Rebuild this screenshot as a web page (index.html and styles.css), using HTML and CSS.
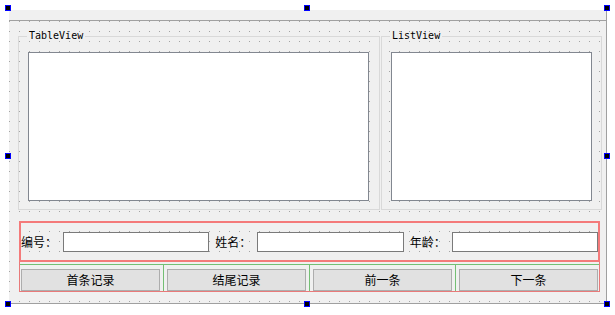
FILE: index.html
```html
<!DOCTYPE html>
<html>
<head>
<meta charset="utf-8">
<link rel="stylesheet" href="styles.css">
</head>
<body>
<div class="page">
  <div class="form">
    <div class="menubar"></div>
    <div class="central">
      <div class="views">
        <fieldset class="group group-table">
          <legend>TableView</legend>
          <div class="view view-table"></div>
        </fieldset>
        <fieldset class="group group-list">
          <legend>ListView</legend>
          <div class="view view-list"></div>
        </fieldset>
      </div>
      <div class="fields">
        <span class="label">编号：</span>
        <input class="edit" type="text">
        <span class="label">姓名：</span>
        <input class="edit" type="text">
        <span class="label">年龄：</span>
        <input class="edit" type="text">
      </div>
      <div class="buttons">
        <div class="btn-cells">
          <button class="btn">首条记录</button>
          <span class="sep"></span>
          <button class="btn">结尾记录</button>
          <span class="sep"></span>
          <button class="btn">前一条</button>
          <span class="sep"></span>
          <button class="btn">下一条</button>
        </div>
      </div>
    </div>
  </div>
  <span class="handle h-tl"></span>
  <span class="handle h-tm"></span>
  <span class="handle h-tr"></span>
  <span class="handle h-ml"></span>
  <span class="handle h-mr"></span>
  <span class="handle h-bl"></span>
  <span class="handle h-bm"></span>
  <span class="handle h-br"></span>
</div>
</body>
</html>
```
FILE: styles.css
```css
html, body {
  margin: 0;
  background: #ffffff;
  font-family: "Noto Sans CJK SC", "Noto Sans", sans-serif;
}

.page {
  position: relative;
  width: 615px;
  height: 315px;
  padding: 10px 0 0 9px;
  box-sizing: border-box;
}

.form {
  width: 598px;
  height: 294px;
  box-sizing: border-box;
  background: #f0f0f0;
  border-right: 1px solid #a0a0a0;
  border-bottom: 1px solid #a0a0a0;
  display: flex;
  flex-direction: column;
}

.menubar {
  flex: none;
  height: 10px;
  border-bottom: 1px solid #a0a0a0;
}

.central {
  flex: 1;
  padding: 9px 0 0 9px;
  background: conic-gradient(at 1px 1px, transparent 75%, #a4a4a4 0) 0 0 / 10px 10px;
}

.views {
  display: flex;
  gap: 1px;
}

.group {
  margin: 0;
  padding: 10px 10px 8px 9px;
  border: 1px solid #d9d9d9;
  min-inline-size: 0;
  box-sizing: border-box;
}

.group-table { width: 362px; }
.group-list { width: 221px; padding-right: 9px; }

.group legend {
  padding: 0 2px;
  margin-left: -1px;
  font-family: "DejaVu Sans Mono", "Liberation Mono", monospace;
  font-size: 10px;
  line-height: 12px;
  color: #000;
}

.view {
  height: 149px;
  box-sizing: border-box;
  background: #ffffff;
  border: 1px solid #828790;
}

.fields {
  margin: 11px 0 0 1px;
  width: 581px;
  height: 41px;
  box-sizing: border-box;
  border: 2px solid #f47a7a;
  display: flex;
  align-items: center;
  gap: 6px;
}

.label {
  flex: none;
  width: 36px;
  font-size: 12px;
  line-height: 14px;
  color: #000;
  white-space: nowrap;
}

.edit {
  flex: 1;
  min-width: 0;
  height: 20px;
  margin: 0;
  padding: 0;
  box-sizing: border-box;
  background: #ffffff;
  border: 1px solid #7a7a7a;
  border-radius: 0;
  outline: none;
}

.buttons {
  margin-left: 1px;
  width: 581px;
  box-sizing: border-box;
  border: 1px solid #e87a7a;
  border-top: none;
  padding-top: 2px;
}

.btn-cells {
  display: flex;
  height: 26px;
  border-top: 1px solid #74bf74;
  padding: 0 1px;
}

.btn {
  flex: 1;
  min-width: 0;
  align-self: flex-end;
  height: 22px;
  margin: 0;
  padding: 0;
  box-sizing: border-box;
  background: #e1e1e1;
  border: 1px solid #adadad;
  border-radius: 0;
  font-family: "Noto Sans CJK SC", sans-serif;
  font-size: 12px;
  line-height: 14px;
  color: #000;
}

.sep {
  flex: none;
  width: 1px;
  margin: 0 3px;
  background: #74bf74;
}

.handle {
  position: absolute;
  width: 6px;
  height: 6px;
  box-sizing: border-box;
  background: #000;
  border: 1px solid #0000ff;
}

.h-tl { left: 5px; top: 5px; }
.h-tm { left: 304px; top: 5px; }
.h-tr { left: 604px; top: 5px; }
.h-ml { left: 5px; top: 153px; }
.h-mr { left: 604px; top: 153px; }
.h-bl { left: 5px; top: 301px; }
.h-bm { left: 304px; top: 301px; }
.h-br { left: 604px; top: 301px; }
```
